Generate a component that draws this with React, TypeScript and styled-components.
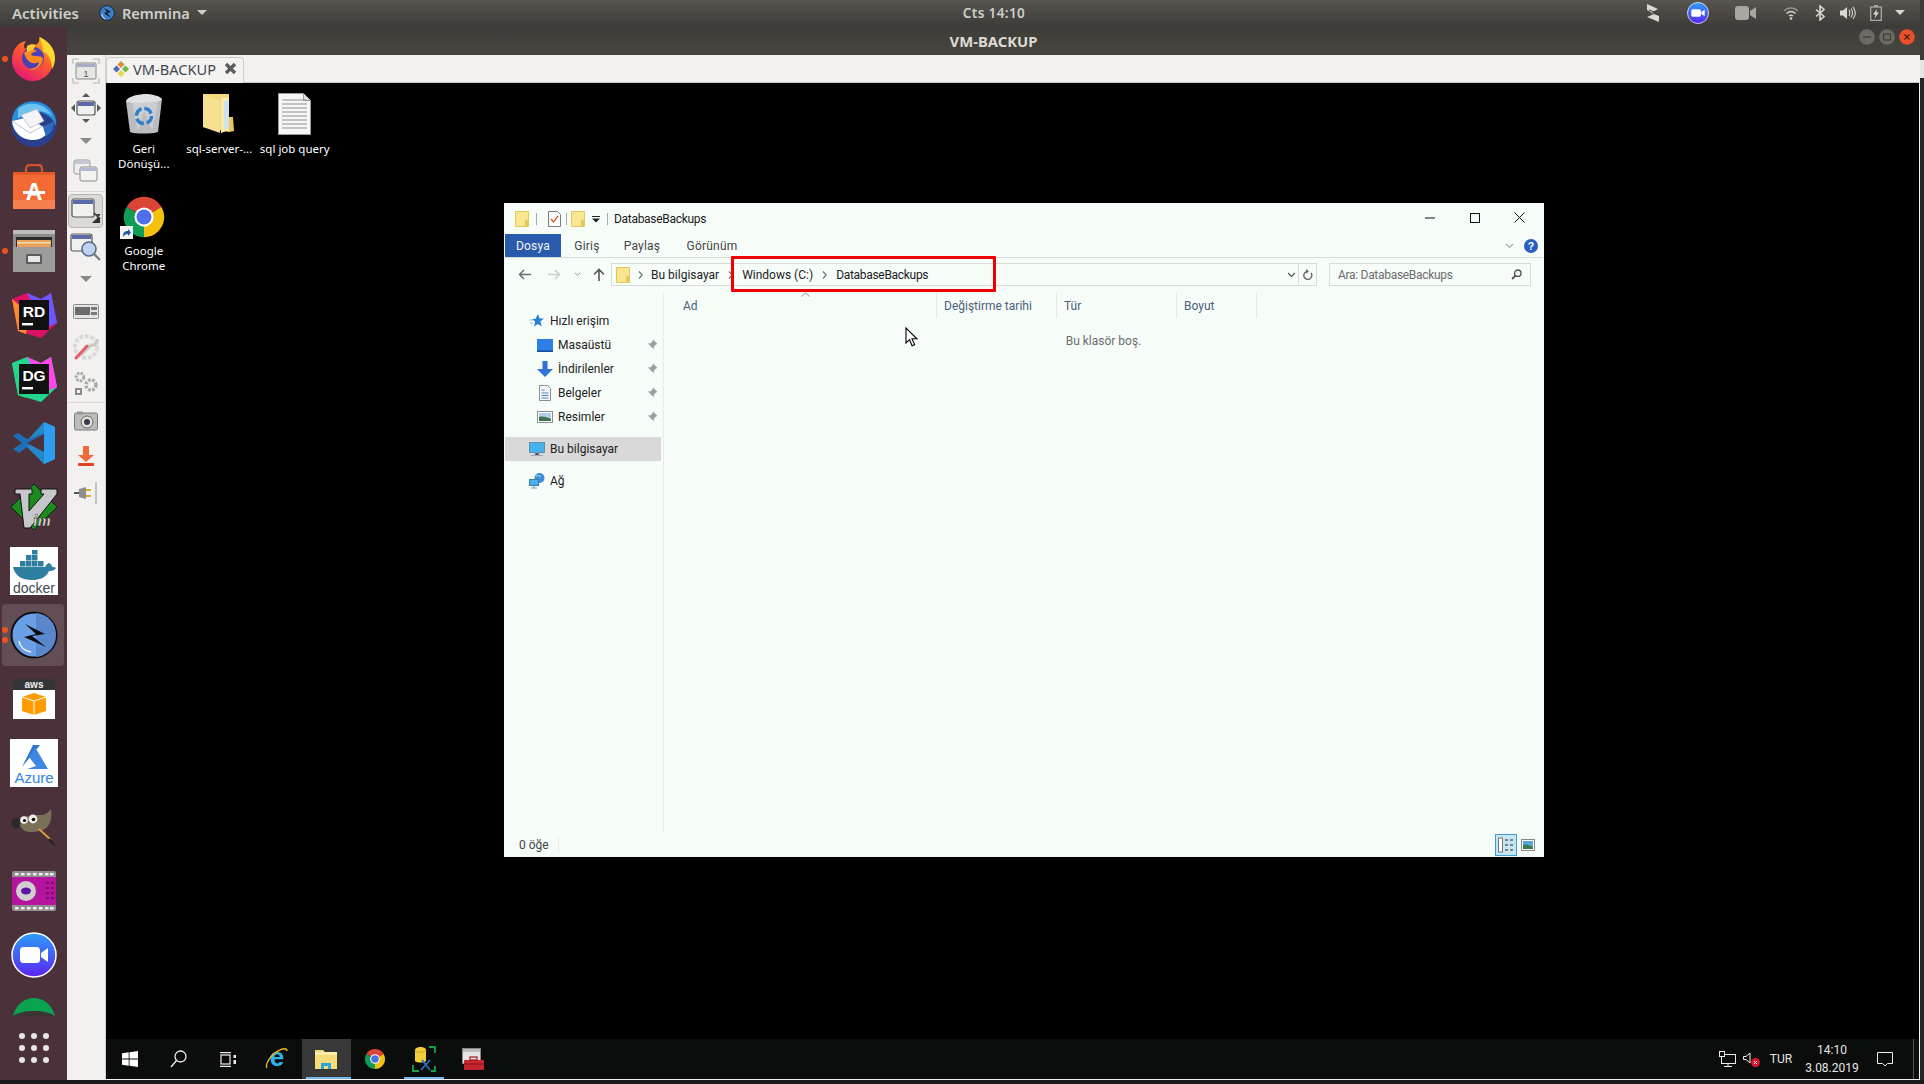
import React from 'react';
import styled, { createGlobalStyle } from 'styled-components';

const GlobalStyle = createGlobalStyle`
  html, body {
    margin: 0;
    padding: 0;
    background: #1c1c1c;
    overflow: hidden;
  }
  * {
    box-sizing: border-box;
  }
`;

const Page = styled.div`
  width: 1924px;
  height: 1084px;
  display: flex;
  align-items: flex-start;
`;

const Screen = styled.div`
  width: 1920px;
  height: 1080px;
  flex: none;
  display: flex;
  flex-direction: column;
  font-family: "Noto Sans", "Open Sans", sans-serif;
`;

const EdgeStrip = styled.div`
  width: 4px;
  height: 1080px;
  flex: none;
  background: linear-gradient(#3c3b37 60px, #e6e6e4 60px, #e6e6e4 78px, #262626 78px);
`;

const TopBar = styled.div`
  height: 27px;
  flex: none;
  display: grid;
  grid-template-columns: 1fr auto 1fr;
  align-items: center;
  padding: 0 12px 2px;
  background: linear-gradient(#56554f, #3c3b37);
  color: #cfcec8;
  font-size: 15px;
  font-weight: 600;
`;

const TopLeft = styled.div`
  display: flex;
  align-items: center;
  gap: 20px;
`;

const AppMenu = styled.div`
  display: flex;
  align-items: center;
  gap: 7px;
  font-size: 14.6px;
`;

const Clock = styled.div`
  margin-left: 68px;
  font-size: 13.5px;
  letter-spacing: 0.4px;
`;

const TopRight = styled.div`
  display: flex;
  justify-content: flex-end;
  align-items: center;
`;

const TraySlot = styled.div<{ $w: number }>`
  width: ${(p) => p.$w}px;
  display: flex;
  justify-content: center;
  align-items: center;
`;

const Main = styled.div`
  flex: 1;
  display: flex;
  min-height: 0;
`;

const Dock = styled.div`
  width: 67px;
  flex: none;
  display: flex;
  flex-direction: column;
  background: #4b323a;
  overflow: hidden;
`;

const DockSlot = styled.div<{ $active?: boolean; $h?: number }>`
  position: relative;
  height: ${(p) => p.$h ?? 64}px;
  flex: none;
  display: flex;
  align-items: ${(p) => (p.$h ? 'flex-start' : 'center')};
  justify-content: center;
  padding-top: ${(p) => (p.$h ? 11 : 0)}px;
  overflow: hidden;
  &::before {
    content: '';
    display: ${(p) => (p.$active ? 'block' : 'none')};
    position: absolute;
    inset: 1px 3px 1px 2px;
    border-radius: 4px;
    background: rgba(255, 255, 255, 0.14);
  }
  svg {
    position: relative;
    flex: none;
  }
`;

const RunDots = styled.div`
  position: absolute;
  left: 2px;
  top: 0;
  bottom: 0;
  display: flex;
  flex-direction: column;
  justify-content: center;
  gap: 4px;
`;

const RunDot = styled.span`
  width: 6px;
  height: 6px;
  border-radius: 50%;
  background: #e95420;
`;

const AppArea = styled.div`
  flex: 1;
  display: flex;
  flex-direction: column;
  min-width: 0;
`;

const TitleBar = styled.div`
  height: 28px;
  flex: none;
  display: flex;
  align-items: center;
  justify-content: center;
  position: relative;
  background: linear-gradient(#3e3d39, #46453f);
  color: #dedbd2;
  font-size: 14.8px;
  font-weight: 700;
  padding-bottom: 1px;
`;

const WinButtons = styled.div`
  position: absolute;
  right: 3px;
  top: 2px;
  display: flex;
  align-items: center;
`;

const RemminaBody = styled.div`
  flex: 1;
  display: flex;
  min-height: 0;
  background: #f2f1ef;
`;

const ToolBar = styled.div`
  width: 39px;
  flex: none;
  display: flex;
  flex-direction: column;
  border-right: 1px solid #d4d2ce;
`;

const ToolSlot = styled.div<{ $h: number; $selected?: boolean }>`
  height: ${(p) => p.$h}px;
  flex: none;
  display: flex;
  align-items: center;
  justify-content: center;
  margin: 0 ${(p) => (p.$selected ? '2px' : '0')} 0 ${(p) => (p.$selected ? '1px' : '0')};
  border-radius: 4px;
  ${(p) => (p.$selected ? 'background: #dcdad6; border: 1px solid #b8b6b1;' : '')}
`;

const ToolSep = styled.div<{ $after?: number }>`
  height: 1px;
  flex: none;
  margin-bottom: ${(p) => p.$after ?? 0}px;
  background: #dbd9d5;
`;

const SessionColumn = styled.div`
  flex: 1;
  display: flex;
  flex-direction: column;
  min-width: 0;
`;

const TabStrip = styled.div`
  height: 28px;
  flex: none;
  display: flex;
  align-items: flex-end;
  border-bottom: 1px solid #c9c7c2;
`;

const SessionTab = styled.div`
  width: 138px;
  height: 26px;
  margin-bottom: -1px;
  display: flex;
  align-items: center;
  gap: 3px;
  padding: 0 0 4px 5px;
  background: #f4f3f1;
  border: 1px solid #cfcdc8;
  border-bottom: none;
  border-radius: 4px 4px 0 0;
  color: #3f4650;
  font-size: 14.6px;
`;

const TabClose = styled.span`
  display: flex;
  margin-left: 5px;
`;

const Desktop = styled.div`
  flex: 1;
  display: flex;
  flex-direction: column;
  min-height: 0;
  background: #000;
  margin-bottom: 1px;
  margin-right: 1px;
`;

const DesktopArea = styled.div`
  flex: 1;
  position: relative;
  min-height: 0;
`;

const IconGrid = styled.div`
  position: absolute;
  left: 0;
  top: 0;
  display: grid;
  grid-template-columns: repeat(3, 75.5px);
  grid-template-rows: 102px 100px;
  padding: 10px 0 0 0;
`;

const DesktopIcon = styled.div`
  display: flex;
  flex-direction: column;
  align-items: center;
  color: #fff;
  font-size: 11.5px;
  line-height: 15px;
  text-align: center;
  svg {
    margin-bottom: 6px;
  }
`;

const ExplorerWindow = styled.div`
  position: absolute;
  left: 398px;
  top: 120px;
  width: 1040px;
  height: 654px;
  display: flex;
  flex-direction: column;
  padding: 0 1px;
  background: #f6fdf9;
  color: #1c1c1c;
  font-family: Roboto, "Noto Sans", sans-serif;
  font-size: 12px;
`;

const TightText = styled.span`
  letter-spacing: -0.3px;
  white-space: nowrap;
`;

const WinTitle = styled.div`
  height: 31px;
  flex: none;
  display: flex;
  align-items: center;
  padding-left: 10px;
`;

const QuickSep = styled.span<{ $l: number; $r: number }>`
  width: 1px;
  height: 12px;
  margin: 0 ${(p) => p.$r}px 0 ${(p) => p.$l}px;
  background: #a8aca9;
`;

const CaptionButtons = styled.div`
  margin-left: auto;
  padding-right: 1px;
  display: flex;
`;

const CaptionButton = styled.div`
  width: 45px;
  height: 29px;
  margin-bottom: 2px;
  display: flex;
  align-items: center;
  justify-content: center;
`;

const RibbonTabs = styled.div`
  height: 24px;
  flex: none;
  display: flex;
  align-items: stretch;
  border-bottom: 1px solid #d8dcd9;
  padding-right: 5px;
`;

const RibbonTab = styled.div<{ $active?: boolean; $w: number }>`
  width: ${(p) => p.$w}px;
  height: 23px;
  display: flex;
  align-items: center;
  justify-content: center;
  background: ${(p) => (p.$active ? '#2a5aab' : 'transparent')};
  color: ${(p) => (p.$active ? '#f2f6fb' : '#444')};
  letter-spacing: 0.2px;
`;

const RibbonEnd = styled.div`
  margin-left: auto;
  display: flex;
  align-items: center;
  gap: 10px;
`;

const AddressRow = styled.div`
  height: 35px;
  flex: none;
  display: flex;
  align-items: center;
  padding-bottom: 2px;
`;

const NavButton = styled.div<{ $w: number }>`
  width: ${(p) => p.$w}px;
  flex: none;
  display: flex;
  justify-content: center;
  align-items: center;
`;

const AddressBox = styled.div`
  width: 706px;
  height: 23px;
  margin-left: 2px;
  flex: none;
  display: flex;
  align-items: center;
  padding-left: 4px;
  border: 1px solid #d8dcd9;
`;

const Crumb = styled.span`
  white-space: nowrap;
`;

const CrumbArrow = styled.span<{ $w: number }>`
  width: ${(p) => p.$w}px;
  flex: none;
  display: flex;
  justify-content: center;
`;

const AddressEnd = styled.div`
  margin-left: auto;
  height: 100%;
  display: flex;
  align-items: center;
`;

const RefreshCell = styled.div`
  width: 18px;
  height: 100%;
  margin-left: 2px;
  display: flex;
  align-items: center;
  justify-content: center;
  border-left: 1px solid #d8dcd9;
`;

const SearchBox = styled.div`
  width: 202px;
  height: 23px;
  margin-left: 12px;
  flex: none;
  display: flex;
  align-items: center;
  justify-content: space-between;
  padding: 0 8px;
  border: 1px solid #d8dcd9;
  color: #6d6d6d;
`;

const ContentRow = styled.div`
  flex: 1;
  display: flex;
  min-height: 0;
`;

const NavPane = styled.div`
  width: 159px;
  flex: none;
  padding-top: 16px;
  border-right: 1px solid #e6ece8;
`;

const NavRow = styled.div<{ $indent: number; $selected?: boolean; $gapTop?: boolean }>`
  height: 24px;
  display: flex;
  align-items: center;
  gap: 5px;
  margin: ${(p) => (p.$gapTop ? '8px' : '0')} 2px 0 0;
  padding: 0 3px 0 ${(p) => p.$indent}px;
  background: ${(p) => (p.$selected ? '#d9d9d9' : 'transparent')};
  color: #222;
`;

const NavPin = styled.span`
  margin-left: auto;
  display: flex;
`;

const FileArea = styled.div`
  flex: 1;
  display: flex;
  flex-direction: column;
  position: relative;
`;

const ColumnHeader = styled.div`
  height: 25px;
  flex: none;
  display: flex;
`;

const ColumnCell = styled.div<{ $w: number; $pad?: number }>`
  width: ${(p) => p.$w}px;
  flex: none;
  display: flex;
  align-items: center;
  padding-left: ${(p) => p.$pad ?? 7}px;
  border-right: 1px solid #e3e8e5;
  color: #4c607a;
`;

const SortCaret = styled.div`
  position: absolute;
  left: 137px;
  top: -1px;
  display: flex;
`;

const EmptyNote = styled.div`
  margin-top: 16px;
  text-align: center;
  color: #6d6d6d;
`;

const Pointer = styled.div`
  position: absolute;
  left: 241px;
  top: 34px;
  display: flex;
`;

const StatusBar = styled.div`
  height: 24px;
  flex: none;
  display: flex;
  align-items: center;
  padding: 0 7px 1px 14px;
  color: #444;
`;

const StatusCount = styled.span`
  width: 40px;
  border-right: 1px solid #e6ece8;
`;

const ViewButtons = styled.div`
  margin-left: auto;
  display: flex;
  align-items: center;
  gap: 3px;
`;

const ViewButton = styled.div<{ $active?: boolean }>`
  width: ${(p) => (p.$active ? 22 : 16)}px;
  height: 22px;
  display: flex;
  align-items: center;
  justify-content: center;
  ${(p) => (p.$active ? 'background: #c4e6f3; border: 1px solid #3f9bd6;' : '')}
`;

const RedFrame = styled.div`
  position: absolute;
  left: 227px;
  top: 53px;
  width: 265px;
  height: 36px;
  border: 3px solid #f00000;
  border-radius: 1px;
  pointer-events: none;
`;

const Taskbar = styled.div`
  height: 40px;
  flex: none;
  display: flex;
  align-items: stretch;
  background: #0b0c0c;
  color: #e6e6e6;
  font-family: Roboto, "Noto Sans", sans-serif;
`;

const TaskSlot = styled.div<{ $open?: boolean; $focused?: boolean }>`
  width: 49px;
  flex: none;
  display: flex;
  align-items: center;
  justify-content: center;
  padding-right: 2px;
  background-color: ${(p) => (p.$focused ? '#383838' : 'transparent')};
  background-image: ${(p) => (p.$open ? 'linear-gradient(#76b9ed, #76b9ed)' : 'none')};
  background-repeat: no-repeat;
  background-position: 4px bottom;
  background-size: ${(p) => (p.$focused ? '48px' : '40px')} 2px;
`;

const IeLift = styled.span`
  display: flex;
  margin-top: -4px;
`;

const TaskTray = styled.div`
  margin-left: auto;
  display: flex;
  align-items: center;
  font-size: 12px;
  height: 100%;
`;

const TrayIcon = styled.div<{ $w: number }>`
  width: ${(p) => p.$w}px;
  display: flex;
  align-items: center;
  justify-content: center;
`;

const TrayClock = styled.div`
  width: 62px;
  display: flex;
  flex-direction: column;
  align-items: center;
  line-height: 18px;
`;

const TrayEnd = styled.div`
  width: 6px;
  height: 100%;
  margin-left: 6px;
  border-left: 1px solid #555;
`;

/* ------- drawings ------- */

const Firefox = () => (
  <svg width="46" height="46" viewBox="0 0 46 46">
    <defs>
      <linearGradient id="ffa" x1="0.8" y1="0" x2="0.2" y2="1">
        <stop offset="0" stopColor="#ffb32c" />
        <stop offset="0.45" stopColor="#ff5a2e" />
        <stop offset="1" stopColor="#e3127a" />
      </linearGradient>
    </defs>
    <path d="M28 1c7 4 14 10 15 19 1 14-9 25-21 25C10 45 1 35 1 24 1 14 7 6 15 5c-3 4-2 7-1 8 3-3 8-5 11-4C28 7 29 4 28 1z" fill="url(#ffa)" />
    <path d="M29 1c8 4 15 11 15 21 0 4-1 8-3 11 0-8-3-14-9-18 0-5-2-9-3-14z" fill="#ffd92f" />
    <circle cx="22" cy="22" r="11" fill="#4c3fb8" />
    <path d="M13 17c4-3 9-5 13-2-3 1-6 2-6 4 4 2 9 0 12 3 0 8-8 14-15 11 6 0 10-2 11-7-5 3-12 1-15-9z" fill="#ff8a1e" />
    <path d="M16 10c3-2 7-2 9-1l-3 5c-2 0-4 1-6 2z" fill="#ffca2c" />
  </svg>
);

const Thunderbird = () => (
  <svg width="48" height="48" viewBox="0 0 48 48">
    <circle cx="24" cy="25" r="23" fill="#2b3f8f" />
    <path d="M6 10c6-8 20-10 30-4 7 5 11 13 10 21-3-8-9-12-16-14l-18 6L2 22C2 17 4 13 6 10z" fill="#2a8fd8" />
    <path d="M8 10c6-6 18-7 26-2 3 2 6 5 8 9-6-5-14-6-22-4L8 19z" fill="#6ec3f0" />
    <path d="M2 22l17-4 14 10 9-3c-2 10-11 17-21 16C11 40 3 33 2 22z" fill="#fff" />
    <path d="M2 22l18 12 13-7" fill="none" stroke="#b9c3d6" strokeWidth="1" />
    <path d="M11 16l16-6 7 12-14 7z" fill="#f4f4f6" stroke="#aab" strokeWidth="0.6" />
    <path d="M33 28l12-6-3 10-6 6z" fill="#2c6bbf" />
  </svg>
);

const SoftwareCenter = () => (
  <svg width="44" height="46" viewBox="0 0 44 46">
    <path d="M14 10V5c0-3 2-4 4-4h8c2 0 4 1 4 4v5" fill="none" stroke="#c9552a" strokeWidth="2.4" />
    <rect x="1" y="8" width="42" height="37" fill="#f26b35" />
    <rect x="1" y="8" width="42" height="3" fill="#e05a26" />
    <rect x="1" y="36" width="42" height="9" fill="#f6814e" />
    <text x="22" y="36" textAnchor="middle" fontFamily="Liberation Sans" fontWeight="700" fontSize="23" fill="#fff">A</text>
    <rect x="11" y="27" width="22" height="3" fill="#fff" />
  </svg>
);

const FileCabinet = () => (
  <svg width="44" height="44" viewBox="0 0 44 44">
    <rect x="1" y="1" width="42" height="42" rx="3" fill="#8d8d8b" />
    <rect x="1" y="1" width="42" height="4" fill="#bdbdba" />
    <rect x="4" y="8" width="36" height="10" fill="#2a2a2a" />
    <rect x="5" y="11" width="34" height="7" fill="#e9a05a" />
    <rect x="5" y="13" width="34" height="1.5" fill="#f5d9b0" />
    <rect x="1" y="18" width="42" height="25" fill="#9c9c9a" />
    <rect x="14" y="25" width="16" height="10" rx="1.5" fill="#5c5c5c" />
    <rect x="16" y="27" width="12" height="6" fill="#e8e8e6" />
  </svg>
);

const JetBrains = ({ label, a, b, c }: { label: string; a: string; b: string; c: string }) => (
  <svg width="48" height="48" viewBox="0 0 48 48">
    <path d="M2 8l15-6 14 6 10-6 6 30-16 15L8 40z" fill={a} />
    <path d="M17 2l14 6 10-6 6 30-12 5z" fill={b} />
    <path d="M2 8l6 32 8 3 4-20z" fill={c} />
    <rect x="9" y="9" width="30" height="30" fill="#111" />
    <text x="24" y="26" textAnchor="middle" fontFamily="Liberation Sans" fontWeight="700" fontSize="15.5" fill="#fff">{label}</text>
    <rect x="12" y="32" width="11" height="2.4" fill="#fff" />
  </svg>
);

const VsCode = () => (
  <svg width="44" height="44" viewBox="0 0 44 44">
    <path d="M32 1l11 5v32l-11 5L12 23z" fill="#2489ca" />
    <path d="M32 1l11 5v32l-11 5z" fill="#2d9df0" />
    <path d="M32 12L15 26 7 32 1 28l9-6-9-7 5-3 9 6z" fill="#1f6fb8" />
    <path d="M32 13v18L15 22z" fill="#4b323a" />
  </svg>
);

const Vim = () => (
  <svg width="48" height="48" viewBox="0 0 48 48">
    <path d="M24 1l23 23-23 23L1 24z" fill="#1d8a1d" stroke="#111" strokeWidth="0.8" />
    <path d="M5 6h17v5h-3v17L34 11h-3V6h16v5L20 45h-6L10 11H5z" fill="#c7c7cb" stroke="#111" strokeWidth="1" />
    <text x="32" y="43" textAnchor="middle" fontFamily="Liberation Serif" fontStyle="italic" fontWeight="700" fontSize="17" fill="#ddd" stroke="#111" strokeWidth="0.4">im</text>
  </svg>
);

const DockerLogo = () => (
  <svg width="48" height="48" viewBox="0 0 48 48">
    <rect width="48" height="48" fill="#fff" />
    <g fill="#2e7f9f">
      <rect x="10" y="14" width="5.5" height="5.5" />
      <rect x="16" y="14" width="5.5" height="5.5" />
      <rect x="22" y="14" width="5.5" height="5.5" />
      <rect x="16" y="8" width="5.5" height="5.5" />
      <rect x="22" y="8" width="5.5" height="5.5" />
      <rect x="22" y="3" width="5.5" height="4.5" />
      <rect x="28" y="14" width="5.5" height="5.5" />
    </g>
    <path d="M3 20h32c1-2 3-4 4-4 2 1 3 2 3 4 2 0 3 0 4 1-2 3-5 3-7 3-3 7-10 9-17 9-10 0-17-4-19-13z" fill="#2e7f9f" />
    <text x="24" y="46" textAnchor="middle" fontFamily="Liberation Sans" fontSize="14" fill="#3c4a52">docker</text>
  </svg>
);

const RemminaLogo = ({ size = 48 }: { size?: number }) => (
  <svg width={size} height={size} viewBox="0 0 48 48">
    <circle cx="24" cy="24" r="22.5" fill="#6a9fe6" stroke="#0d0d12" strokeWidth="2" />
    <path d="M26 2c12 1 20 10 20 22 0 12-9 21-20 22z" fill="#5a86cc" />
    <path d="M9 30c1 6 6 10 12 11" fill="none" stroke="#fff" strokeWidth="1.5" />
    <path d="M15 13l20 10-13 2 14 11-22-10 12-3z" fill="#0b0b10" />
  </svg>
);

const AwsBox = () => (
  <svg width="42" height="40" viewBox="0 0 42 40">
    <rect width="42" height="40" fill="#fff" />
    <rect width="42" height="11" fill="#333537" />
    <text x="21" y="9" textAnchor="middle" fontFamily="Liberation Sans" fontWeight="700" fontSize="10" fill="#eee">aws</text>
    <path d="M21 14l12 4v14l-12 4-12-4V18z" fill="#ff9a00" />
    <path d="M9 18l12 4 12-4" fill="none" stroke="#fff" strokeWidth="1" />
    <path d="M21 22v14" stroke="#fff" strokeWidth="1" />
  </svg>
);

const AzureLogo = () => (
  <svg width="48" height="48" viewBox="0 0 48 48">
    <rect width="48" height="48" fill="#fff" />
    <path d="M23 6h7L12 28z" fill="#2f74d0" />
    <path d="M25 8l13 22H17l9-3-7-9z" fill="#3d88e0" />
    <text x="24" y="44" textAnchor="middle" fontFamily="Liberation Sans" fontSize="15" fill="#2f86d8">Azure</text>
  </svg>
);

const Gimp = () => (
  <svg width="46" height="40" viewBox="0 0 46 40">
    <path d="M8 14C12 8 22 8 30 8c4 0 7-2 10-6 1 8 0 16-6 20-6 3-15 4-20 2-3-2-6-5-6-10z" fill="#7a7058" />
    <ellipse cx="5" cy="16" rx="4.5" ry="5.5" fill="#2a2a2a" />
    <circle cx="13" cy="13" r="3.8" fill="#eee" />
    <circle cx="22" cy="12" r="4.4" fill="#eee" />
    <circle cx="13.5" cy="13.5" r="1.6" fill="#111" />
    <circle cx="22.5" cy="12.5" r="1.8" fill="#111" />
    <path d="M28 22l12 11" stroke="#e09a3a" strokeWidth="1.8" />
    <path d="M39 31l5 7-1 1-6-6z" fill="#222" />
  </svg>
);

const VideoApp = () => (
  <svg width="44" height="40" viewBox="0 0 44 40">
    <rect width="44" height="40" rx="2" fill="#8f8f8f" />
    <rect y="6" width="44" height="28" fill="#b5149e" />
    <g fill="#f5f5f5">
      {[3, 9, 15, 21, 27, 33, 38].map((x) => (
        <React.Fragment key={x}>
          <rect x={x} y="2" width="3.5" height="2.4" />
          <rect x={x} y="36" width="3.5" height="2.4" />
        </React.Fragment>
      ))}
    </g>
    <g fill="#7c0c6c">
      {[11, 16, 21, 26].map((y) => (
        <React.Fragment key={y}>
          <rect x="34" y={y} width="3" height="2" />
          <rect x="39" y={y} width="3" height="2" />
        </React.Fragment>
      ))}
    </g>
    <circle cx="14" cy="20" r="10" fill="#cfcfcf" />
    <ellipse cx="14" cy="20" rx="5" ry="3.4" fill="#5f12a8" />
  </svg>
);

const ZoomLogo = ({ size = 46 }: { size?: number }) => (
  <svg width={size} height={size} viewBox="0 0 46 46">
    <defs>
      <linearGradient id={`zg${size}`} x1="0" y1="0" x2="0" y2="1">
        <stop offset="0" stopColor="#2c9dfb" />
        <stop offset="1" stopColor="#5a25f2" />
      </linearGradient>
    </defs>
    <circle cx="23" cy="23" r="22" fill={`url(#zg${size})`} stroke="#fff" strokeWidth="1.5" />
    <rect x="9" y="15" width="20" height="16" rx="3.5" fill="#fff" />
    <path d="M30 21l7-5v14l-7-5z" fill="#fff" />
  </svg>
);

const GreenDome = () => (
  <svg width="42" height="22" viewBox="0 0 42 22">
    <path d="M0 18C3 6 12 0 21 0s18 6 21 18c-6-4-14-5-21-5s-15 1-21 5z" fill="#0aa34f" />
    <path d="M0 18c6-4 14-5 21-5s15 1 21 5v4H0z" fill="#2f3a30" opacity="0.55" />
  </svg>
);

const AppGrid = () => (
  <svg width="32" height="32" viewBox="0 0 32 32" fill="#e8e5e5">
    {[4, 16, 28].map((y) => [4, 16, 28].map((x) => <circle key={`${x}-${y}`} cx={x} cy={y} r="3" />))}
  </svg>
);

const RemminaSmall = () => (
  <svg width="16" height="16" viewBox="0 0 16 16">
    <circle cx="8" cy="8" r="7.4" fill="#3f7fc9" stroke="#12243c" strokeWidth="1" />
    <path d="M5 3l7 4-4 1 4 5-7-5 3-1z" fill="#0d1420" />
    <path d="M3 9c0 2 1 4 3 5" fill="none" stroke="#fff" strokeWidth="0.9" />
  </svg>
);

const DownCaret = ({ c = '#cfcec8', w = 10, h = 5 }: { c?: string; w?: number; h?: number }) => (
  <svg width={w} height={h} viewBox="0 0 10 5">
    <path d="M0 0h10L5 5z" fill={c} />
  </svg>
);

const ZigZag = () => (
  <svg width="14" height="20" viewBox="0 0 14 20">
    <path d="M1 1l11 5-7 4 8 3v6L1 14l7-3L1 7z" fill="#d9d9d0" />
    <path d="M3 7l8 3" stroke="#3c3b37" strokeWidth="1" />
  </svg>
);

const TrayVideo = () => (
  <svg width="21" height="14" viewBox="0 0 21 14" fill="#a8a7a1">
    <rect width="14" height="14" rx="3" />
    <path d="M15 5l6-4v12l-6-4z" />
  </svg>
);

const Wifi = () => (
  <svg width="16" height="14" viewBox="0 0 16 14" fill="none" stroke="#d8d7d0">
    <path d="M1 5c4-4 10-4 14 0" opacity="0.5" strokeWidth="1.4" />
    <path d="M3.5 7.5c3-2.6 6-2.6 9 0" strokeWidth="1.4" />
    <path d="M6 10c1.4-1 2.6-1 4 0" strokeWidth="1.4" />
    <circle cx="8" cy="12.5" r="1.2" fill="#d8d7d0" stroke="none" />
  </svg>
);

const Bluetooth = () => (
  <svg width="10" height="16" viewBox="0 0 10 16" fill="none" stroke="#d8d7d0" strokeWidth="1.6">
    <path d="M1 4.5l8 7L5 15V1l4 3.5-8 7" />
  </svg>
);

const Volume = () => (
  <svg width="16" height="14" viewBox="0 0 16 14" fill="#d8d7d0">
    <path d="M0 4.5h3L7 1v12L3 9.5H0z" />
    <path d="M9 4c1 2 1 4 0 6M11 2.5c2 3 2 6 0 9M13 1c3 4 3 8 0 12" fill="none" stroke="#d8d7d0" strokeWidth="1.1" />
  </svg>
);

const Battery = () => (
  <svg width="12" height="16" viewBox="0 0 12 16">
    <rect x="0.7" y="2" width="10.6" height="13.4" fill="none" stroke="#a8a7a1" strokeWidth="1.3" />
    <rect x="4" y="0" width="4" height="2" fill="#a8a7a1" />
    <path d="M7 4L3 9.5h2.5L4.5 13.5 9 7.5H6.5z" fill="#d8d7d0" />
  </svg>
);

const CircleBtn = ({ red, glyph }: { red?: boolean; glyph: 'min' | 'max' | 'close' }) => (
  <svg width="16" height="16" viewBox="0 0 16 16">
    <circle cx="8" cy="8" r="7.8" fill={red ? '#e8502a' : '#6b6a63'} />
    {glyph === 'min' && <path d="M4 8h8" stroke="#3b3a35" strokeWidth="1.2" />}
    {glyph === 'max' && <rect x="4.5" y="5" width="7" height="6" fill="none" stroke="#3b3a35" strokeWidth="1.1" />}
    {glyph === 'close' && <path d="M5.5 5.5l5 5M10.5 5.5l-5 5" stroke="#4a1c0e" strokeWidth="1.2" />}
  </svg>
);

const MiniWindow = ({ x = 6, y = 8, w = 20, h = 16 }: { x?: number; y?: number; w?: number; h?: number }) => (
  <g>
    <rect x={x} y={y} width={w} height={h} rx="2" fill="#f0f0ee" stroke="#565656" strokeWidth="1.2" />
    <rect x={x + 1} y={y + 1} width={w - 2} height="4" fill="#5b6aa8" />
  </g>
);

const ToolFit = () => (
  <svg width="28" height="26" viewBox="0 0 28 26">
    <path d="M1 6V1h6M21 1h6v5M27 20v5h-6M7 25H1v-5" fill="none" stroke="#b9b9b6" strokeWidth="1.2" />
    <rect x="4" y="5" width="20" height="16" rx="1" fill="#e6e6e4" stroke="#8a8a88" />
    <rect x="5" y="6" width="18" height="3" fill="#a9aec4" />
    <text x="14" y="19" textAnchor="middle" fontFamily="Liberation Sans" fontSize="9" fill="#555">1</text>
  </svg>
);

const ToolMove = () => (
  <svg width="32" height="32" viewBox="0 0 32 32">
    <MiniWindow x={7} y={9} w={18} h={14} />
    <path d="M16 1l4 4h-8zM16 31l4-4h-8zM1 16l4-4v8zM31 16l-4-4v8z" fill="#5a5a5a" />
  </svg>
);

const ToolStack = () => (
  <svg width="26" height="26" viewBox="0 0 26 26">
    <rect x="1" y="1" width="16" height="14" rx="2" fill="#eee" stroke="#9a9a98" />
    <rect x="2" y="2" width="14" height="3" fill="#c4c8d8" />
    <rect x="7" y="8" width="17" height="14" rx="2" fill="#f2f2f0" stroke="#8a8a88" />
    <rect x="8" y="9" width="15" height="3" fill="#b3b9d0" />
  </svg>
);

const ToolScale = () => (
  <svg width="32" height="28" viewBox="0 0 32 28">
    <MiniWindow x={2} y={2} w={22} h={18} />
    <path d="M26 17l4 4v-4zM30 26h-8l8-8z" fill="#333" />
    <path d="M24 16l6 6" stroke="#333" strokeWidth="1.4" />
  </svg>
);

const ToolZoom = () => (
  <svg width="32" height="30" viewBox="0 0 32 30">
    <MiniWindow x={1} y={2} w={21} h={17} />
    <circle cx="19" cy="17" r="7" fill="#bcd4ef" stroke="#5a6a85" strokeWidth="1.6" />
    <path d="M24 22l6 6" stroke="#77797d" strokeWidth="2.2" />
  </svg>
);

const ToolCaret = () => <DownCaret c="#8a8a88" w={12} h={6} />;

const ToolKeyboard = () => (
  <svg width="26" height="15" viewBox="0 0 26 15">
    <rect x="0.5" y="0.5" width="25" height="14" rx="1" fill="#e4e4e2" stroke="#8a8a88" />
    <rect x="2" y="3" width="15" height="8" fill="#6a6a68" />
    <rect x="18" y="3" width="6" height="3" fill="#777" />
    <rect x="18" y="8" width="6" height="3" fill="#777" />
  </svg>
);

const ToolWrench = () => (
  <svg width="26" height="26" viewBox="0 0 26 26">
    <circle cx="13" cy="13" r="11" fill="none" stroke="#d9d9d7" strokeWidth="4" strokeDasharray="4 1.6" />
    <path d="M24 5c1 4-2 7-6 6L8 21" fill="none" stroke="#c9c9c7" strokeWidth="3" />
    <path d="M3 24l11-12" stroke="#e0606a" strokeWidth="3" strokeLinecap="round" />
  </svg>
);

const ToolGears = () => (
  <svg width="26" height="26" viewBox="0 0 26 26" fill="none" stroke="#a9a9a7">
    <circle cx="7" cy="7" r="3.8" strokeWidth="3" strokeDasharray="2.4 1.2" />
    <circle cx="18" cy="15" r="5" strokeWidth="3.4" strokeDasharray="2.6 1.4" />
    <rect x="3" y="19" width="5" height="5" strokeWidth="2" stroke="#8a8a88" />
  </svg>
);

const ToolCamera = () => (
  <svg width="24" height="20" viewBox="0 0 24 20">
    <rect x="0.5" y="2" width="23" height="17" rx="1.5" fill="#bdbdbb" stroke="#7a7a78" />
    <rect x="3" y="0.5" width="6" height="3" fill="#9a9a98" />
    <circle cx="13" cy="11" r="6" fill="#dfdfdd" stroke="#666" />
    <circle cx="13" cy="11" r="3" fill="#3a3a4a" />
  </svg>
);

const ToolDownload = () => (
  <svg width="18" height="22" viewBox="0 0 18 22">
    <path d="M6 1h6v9h5l-8 7-8-7h5z" fill="#ef6a3a" />
    <rect x="1" y="18" width="16" height="3" rx="1" fill="#e0411e" />
  </svg>
);

const ToolPlug = () => (
  <svg width="24" height="24" viewBox="0 0 24 24">
    <path d="M0 12h5" stroke="#555" strokeWidth="2" />
    <path d="M5 8l7-2v12l-7-2z" fill="#8e8e8c" />
    <rect x="12" y="8" width="5" height="2" fill="#d6b32a" />
    <rect x="12" y="14" width="5" height="2" fill="#d6b32a" />
    <path d="M22 1v22" stroke="#c3c3c1" strokeWidth="2" />
  </svg>
);

const RecycleBin = () => (
  <svg width="40" height="42" viewBox="0 0 40 42">
    <path d="M2 8l36-2-4 33c-5 2-24 2-28 0z" fill="#b9bdbf" />
    <path d="M2 8c2-4 8-6 18-7 8 0 16 2 18 5-3 4-30 6-36 2z" fill="#dfe2e4" />
    <path d="M8 10l6 28 6-20 8 20 6-30z" fill="#d2d5d7" opacity="0.7" />
    <circle cx="20" cy="23" r="7.5" fill="none" stroke="#2f7fcb" strokeWidth="3.4" strokeDasharray="9 2.8" />
  </svg>
);

const BigFolder = () => (
  <svg width="34" height="42" viewBox="0 0 34 42">
    <path d="M1 1h26v38L1 34z" fill="#f2d77c" />
    <path d="M19 5l8-1v33l-8 3z" fill="#f8eaaf" />
    <rect x="22" y="8" width="5" height="28" fill="#cfe0ee" />
    <path d="M27 24l4 0 1 14-5 1z" fill="#e8c75c" />
    <path d="M1 34l17 6V8L1 1z" fill="#f7e08f" />
  </svg>
);

const TextFile = () => (
  <svg width="33" height="42" viewBox="0 0 33 42">
    <path d="M0.5 0.5h25l7 7v34h-32z" fill="#f6f6f6" stroke="#9a9a9a" />
    <path d="M25.5 0.5v7h7" fill="#ddd" stroke="#9a9a9a" />
    {[7, 11, 15, 19, 23, 27, 31, 35].map((y) => (
      <path key={y} d={`M4 ${y}h25`} stroke="#8f8f8f" strokeWidth="1" />
    ))}
  </svg>
);

const Chrome = ({ size = 44 }: { size?: number }) => (
  <svg width={size} height={size} viewBox="0 0 48 48">
    <path d="M24 24L4.95 13A22 22 0 0 1 43.05 13z" fill="#db4437" />
    <path d="M24 24L43.05 13A22 22 0 0 1 24 46z" fill="#f4c20d" />
    <path d="M24 24L24 46A22 22 0 0 1 4.95 13z" fill="#0f9d58" />
    <circle cx="24" cy="24" r="10.5" fill="#fff" />
    <circle cx="24" cy="24" r="8.2" fill="#4f6fe8" />
  </svg>
);

const ShortcutBadge = () => (
  <svg width="13" height="13" viewBox="0 0 13 13">
    <rect width="13" height="13" fill="#f2f2f2" />
    <path d="M3 11c0-4 1-6 5-6V3l3 3.5L8 10V8c-2 0-4 1-5 3z" fill="#2a57a8" />
  </svg>
);

const ChromeWithBadge = styled.div`
  position: relative;
  display: flex;
  margin-bottom: 4px;
  svg {
    margin: 0;
  }
  svg + svg {
    position: absolute;
    left: -2px;
    bottom: 0;
  }
`;

const SmallFolder = () => (
  <svg width="14" height="16" viewBox="0 0 14 16">
    <path d="M0.5 0.5h13v15h-13z" fill="#f9e690" stroke="#e3c85a" />
    <rect x="10" y="9" width="3" height="6" fill="#e3c85a" />
  </svg>
);

const CheckDoc = () => (
  <svg width="13" height="16" viewBox="0 0 13 16">
    <path d="M0.5 0.5h9l3 3v12h-12z" fill="#fbfdfc" stroke="#7c7c7c" />
    <path d="M3 8l2.5 3L10 5" fill="none" stroke="#d9553a" strokeWidth="1.3" />
  </svg>
);

const QuickDown = () => (
  <svg width="8" height="8" viewBox="0 0 8 8">
    <rect y="1" width="8" height="1" fill="#222" />
    <path d="M0 3.5h8L4 7.5z" fill="#222" />
  </svg>
);

const Chevron = ({ c = '#8a8a8a', w = 9 }: { c?: string; w?: number }) => (
  <svg width={w} height={w * 0.66} viewBox="0 0 9 6">
    <path d="M1 1l3.5 3.5L8 1" fill="none" stroke={c} strokeWidth="1.2" />
  </svg>
);

const CrumbChevron = () => (
  <svg width="5" height="8" viewBox="0 0 5 8">
    <path d="M1 0.5L4.2 4 1 7.5" fill="none" stroke="#777" strokeWidth="1.3" />
  </svg>
);

const ArrowLeft = ({ c }: { c: string }) => (
  <svg width="13" height="11" viewBox="0 0 13 11">
    <path d="M13 5.5H2M6 1L1.5 5.5 6 10" fill="none" stroke={c} strokeWidth="1.5" />
  </svg>
);

const ArrowRight = ({ c }: { c: string }) => (
  <svg width="13" height="11" viewBox="0 0 13 11">
    <path d="M0 5.5h11M7 1l4.5 4.5L7 10" fill="none" stroke={c} strokeWidth="1.5" />
  </svg>
);

const ArrowUp = () => (
  <svg width="12" height="13" viewBox="0 0 12 13">
    <path d="M6 13V2M1 6.5L6 1.5l5 5" fill="none" stroke="#555" strokeWidth="1.6" />
  </svg>
);

const Refresh = () => (
  <svg width="10" height="12" viewBox="0 0 10 12">
    <path d="M8 4a4 4 0 1 1-3-1.6" fill="none" stroke="#666" strokeWidth="1.4" />
    <path d="M3 0l3 2.4-3 2.2z" fill="#666" />
  </svg>
);

const SearchGlass = () => (
  <svg width="11" height="11" viewBox="0 0 11 11">
    <circle cx="6.8" cy="4.2" r="3.2" fill="none" stroke="#555" strokeWidth="1.4" />
    <path d="M4.5 6.5L1 10" stroke="#555" strokeWidth="1.8" />
  </svg>
);

const HelpDot = () => (
  <svg width="14" height="14" viewBox="0 0 14 14">
    <circle cx="7" cy="7" r="7" fill="#2a5ec0" />
    <text x="7" y="11" textAnchor="middle" fontFamily="Liberation Sans" fontWeight="700" fontSize="10.5" fill="#fff">?</text>
  </svg>
);

const QuickStar = () => (
  <svg width="16" height="14" viewBox="0 0 16 14">
    <path d="M9 0l1.6 4.6H15l-3.6 3 1.3 5L9 10l-4 2.6 1.2-5L3 5l3.6-.3z" fill="#2b7ed6" />
    <path d="M0 6h4M1 9h3" stroke="#8cc0ee" />
  </svg>
);

const DesktopGlyph = () => (
  <svg width="16" height="13" viewBox="0 0 16 13">
    <rect width="16" height="13" fill="#2c7fe6" />
    <rect y="11.5" width="16" height="1.5" fill="#174e96" />
  </svg>
);

const DownloadGlyph = () => (
  <svg width="16" height="16" viewBox="0 0 16 16">
    <path d="M5.5 0h5v8H16l-8 8-8-8h5.5z" fill="#2f73d6" />
  </svg>
);

const DocGlyph = () => (
  <svg width="16" height="16" viewBox="0 0 16 16">
    <path d="M2.5 0.5h8l3 3v12h-11z" fill="#f5f8fb" stroke="#8a8f94" />
    <path d="M4.5 5h3M4.5 8h7M4.5 10.5h7M4.5 13h7" stroke="#4a7fc0" />
  </svg>
);

const PictureGlyph = () => (
  <svg width="16" height="12" viewBox="0 0 16 12">
    <rect x="0.5" y="0.5" width="15" height="11" fill="#fff" stroke="#8a8f94" />
    <rect x="2" y="2" width="12" height="8" fill="#b4cdea" />
    <path d="M2 10V6c3-1 8 0 12 2v2z" fill="#3f7050" />
  </svg>
);

const PinGlyph = () => (
  <svg width="12" height="12" viewBox="0 0 12 12">
    <path d="M7 0.5l4.5 4.5-1.5.5-2 2-.3 2.5L4.5 7.3 1 11l3.7-3.7L2 4.600 4.5 4.300l2-2z" fill="#9aa0a3" />
  </svg>
);

const ComputerGlyph = () => (
  <svg width="16" height="15" viewBox="0 0 16 15">
    <rect x="0.5" y="0.5" width="15" height="10" fill="#45b4ee" stroke="#5d8fb0" />
    <path d="M6 11h4v2H6zM2 13.5h12" stroke="#9ab" />
  </svg>
);

const NetworkGlyph = () => (
  <svg width="16" height="16" viewBox="0 0 16 16">
    <circle cx="10.5" cy="5" r="5" fill="#3d8cd8" />
    <path d="M7 3c2-1 4 0 5 1" stroke="#bfe0f5" fill="none" />
    <rect x="0.5" y="6.5" width="9" height="6" fill="#4eb0e8" stroke="#3c7ea8" />
    <path d="M5 13v2M2 15h6" stroke="#7a9ab0" />
  </svg>
);

const SortUp = () => (
  <svg width="9" height="5" viewBox="0 0 9 5">
    <path d="M0.5 4.5L4.5 1l4 3.5" fill="none" stroke="#8a8f94" />
  </svg>
);

const MouseArrow = () => (
  <svg width="13" height="20" viewBox="0 0 13 20">
    <path d="M1 1v15l3.5-3.3 2.6 6 2.5-1.100-2.600-5.800H12z" fill="#fff" stroke="#000" strokeWidth="1.1" />
  </svg>
);

const DetailsView = () => (
  <svg width="16" height="16" viewBox="0 0 16 16">
    <rect x="0.5" y="1" width="4" height="14" fill="#fff" stroke="#777" />
    <path d="M7 3h3M12 3h3M7 8h3M12 8h3M7 13h3M12 13h3" stroke="#666" strokeWidth="1.5" />
  </svg>
);

const ThumbView = () => (
  <svg width="14" height="12" viewBox="0 0 14 12">
    <rect x="0.5" y="0.5" width="13" height="11" fill="#fff" stroke="#888" />
    <rect x="2" y="2" width="10" height="8" fill="#5aa6dc" />
    <path d="M2 10V6c3-1 6 0 10 2v2z" fill="#3c7d4e" />
  </svg>
);

const VmTabIcon = () => (
  <svg width="18" height="18" viewBox="0 0 18 18">
    <path d="M9 1l3.500 3.500L9 8 5.500 4.500z" fill="#d98a3a" />
    <path d="M4.500 5.500L8 9l-3.500 3.500L1 9z" fill="#4f6db0" />
    <path d="M13.500 5.500L17 9l-3.500 3.500L10 9z" fill="#6dbb3f" />
    <path d="M9 10l3.500 3.500L9 17l-3.500-3.500z" fill="#e8d34a" />
  </svg>
);

const TabX = () => (
  <svg width="13" height="13" viewBox="0 0 13 13">
    <path d="M2 2l9 9M11 2l-9 9" stroke="#5c5c5c" strokeWidth="3.4" />
  </svg>
);

const WinLogo = () => (
  <svg width="16" height="16" viewBox="0 0 16 16" fill="#fff">
    <path d="M0 2.300l6.700-1v6.300H0zM7.500 1.200L16 0v7.600H7.500zM0 8.400h6.700v6.300l-6.700-1zM7.500 8.400H16V16l-8.500-1.200z" />
  </svg>
);

const TaskSearch = () => (
  <svg width="17" height="18" viewBox="0 0 17 18" fill="none" stroke="#eee" strokeWidth="1.3">
    <circle cx="10.5" cy="6.5" r="5.5" />
    <path d="M6.500 10.500L1 17" />
  </svg>
);

const TaskView = () => (
  <svg width="16" height="15" viewBox="0 0 16 15" fill="none" stroke="#eee" strokeWidth="1.2">
    <path d="M0 0.600h11M0 14.400h11" />
    <rect x="1" y="3" width="9" height="9" />
    <rect x="13.5" y="3" width="2.5" height="3" fill="#eee" stroke="none" />
    <rect x="13.5" y="8" width="2.5" height="4" fill="#eee" stroke="none" />
  </svg>
);

const IeLogo = () => (
  <svg width="28" height="30" viewBox="0 0 28 30">
    <text x="14" y="24" textAnchor="middle" fontFamily="Liberation Sans" fontWeight="700" fontSize="26" fill="#2bb3ea">e</text>
    <path d="M4 26C2 23 7 13 15 9c5-3 9-3 9 0" fill="none" stroke="#e9b520" strokeWidth="1.4" />
  </svg>
);

const ExplorerIcon = () => (
  <svg width="22" height="20" viewBox="0 0 22 20">
    <path d="M0 1h8l2 2h12v17H0z" fill="#f7dc7a" />
    <rect y="3.5" width="22" height="2" fill="#fff2b8" />
    <path d="M6 20v-6h10v6h-3v-3H9v3z" fill="#29a6df" />
  </svg>
);

const SsmsIcon = () => (
  <svg width="24" height="26" viewBox="0 0 24 26">
    <path d="M3 4c0-4 11-4 11 0v11c-2 2-9 2-11 0z" fill="#f0cf3a" />
    <path d="M3 4c0 3 11 3 11 0" fill="none" stroke="#c9a820" />
    <path d="M17 1h6v6M1 19v6h6" fill="none" stroke="#16a34a" strokeWidth="1.8" />
    <path d="M23 20v5h-4" fill="none" stroke="#16a34a" strokeWidth="1.8" />
    <path d="M9 24l9-10M18 24l-8-10" stroke="#2a6fc0" strokeWidth="1.8" />
  </svg>
);

const ToolboxIcon = () => (
  <svg width="22" height="23" viewBox="0 0 22 23">
    <rect x="0.5" y="0.5" width="18" height="15" fill="#e4e4e2" stroke="#888" />
    <rect x="1" y="1" width="17" height="3" fill="#bbb" />
    <rect x="2" y="12" width="20" height="10" rx="1" fill="#c5252f" />
    <rect x="8" y="9" width="7" height="3" fill="none" stroke="#a01820" strokeWidth="1.2" />
    <path d="M2 16h20" stroke="#8c1118" />
  </svg>
);

const TrayNet = () => (
  <svg width="17" height="16" viewBox="0 0 17 16" fill="none" stroke="#eee">
    <rect x="2.5" y="3.5" width="14" height="9" fill="#0b0c0c" />
    <rect x="0.5" y="0.5" width="5" height="5" fill="#0b0c0c" />
    <path d="M9 13v2M5 15.5h8" />
  </svg>
);

const TrayMute = () => (
  <svg width="17" height="15" viewBox="0 0 17 15">
    <path d="M0.5 4.5h2.5L7 1v10L3 7.500H0.500z" fill="none" stroke="#eee" />
    <circle cx="12.5" cy="10.5" r="4.5" fill="#e0142a" />
    <path d="M11 9l3 3M14 9l-3 3" stroke="#fff" />
  </svg>
);

const TrayNote = () => (
  <svg width="16" height="15" viewBox="0 0 16 15">
    <path d="M0.5 0.5h15v11h-5l-2.5 2.5-2.5-2.5h-5z" fill="none" stroke="#eee" />
  </svg>
);

const dockApps: { key: string; node: React.ReactNode; dots?: number; active?: boolean }[] = [
  { key: 'firefox', node: <Firefox />, dots: 1 },
  { key: 'thunderbird', node: <Thunderbird /> },
  { key: 'software', node: <SoftwareCenter /> },
  { key: 'files', node: <FileCabinet />, dots: 1 },
  { key: 'rider', node: <JetBrains label="RD" a="#dd1265" b="#6b57ff" c="#ff8a2a" /> },
  { key: 'datagrip', node: <JetBrains label="DG" a="#22d88f" b="#ff45ed" c="#21d789" /> },
  { key: 'vscode', node: <VsCode /> },
  { key: 'vim', node: <Vim /> },
  { key: 'docker', node: <DockerLogo /> },
  { key: 'remmina', node: <RemminaLogo />, dots: 2, active: true },
  { key: 'aws', node: <AwsBox /> },
  { key: 'azure', node: <AzureLogo /> },
  { key: 'gimp', node: <Gimp /> },
  { key: 'video', node: <VideoApp /> },
  { key: 'zoom', node: <ZoomLogo /> },
];

const tools: { h: number; node: React.ReactNode; sepAfter?: boolean; selected?: boolean }[] = [
  { h: 32, node: <ToolFit /> },
  { h: 42, node: <ToolMove /> },
  { h: 24, node: <ToolCaret /> },
  { h: 38, node: <ToolStack />, sepAfter: true },
  { h: 34, node: <ToolScale />, selected: true },
  { h: 38, node: <ToolZoom /> },
  { h: 26, node: <ToolCaret /> },
  { h: 38, node: <ToolKeyboard /> },
  { h: 34, node: <ToolWrench /> },
  { h: 38, node: <ToolGears />, sepAfter: true },
  { h: 36, node: <ToolCamera /> },
  { h: 34, node: <ToolDownload /> },
  { h: 40, node: <ToolPlug /> },
];

const navItems: { label: string; icon: React.ReactNode; indent: number; pin?: boolean; selected?: boolean; gapTop?: boolean }[] = [
  { label: 'Hızlı erişim', icon: <QuickStar />, indent: 24 },
  { label: 'Masaüstü', icon: <DesktopGlyph />, indent: 32, pin: true },
  { label: 'İndirilenler', icon: <DownloadGlyph />, indent: 32, pin: true },
  { label: 'Belgeler', icon: <DocGlyph />, indent: 32, pin: true },
  { label: 'Resimler', icon: <PictureGlyph />, indent: 32, pin: true },
  { label: 'Bu bilgisayar', icon: <ComputerGlyph />, indent: 24, selected: true, gapTop: true },
  { label: 'Ağ', icon: <NetworkGlyph />, indent: 24, gapTop: true },
];

const App: React.FC = () => {
  return (
    <Page>
      <GlobalStyle />
      <Screen>
        <TopBar>
          <TopLeft>
            <span>Activities</span>
            <AppMenu>
              <RemminaSmall />
              <span>Remmina</span>
              <DownCaret />
            </AppMenu>
          </TopLeft>
          <Clock>Cts 14:10</Clock>
          <TopRight>
            <TraySlot $w={62}><ZigZag /></TraySlot>
            <TraySlot $w={28}><ZoomLogo size={22} /></TraySlot>
            <TraySlot $w={66}><TrayVideo /></TraySlot>
            <TraySlot $w={26}><Wifi /></TraySlot>
            <TraySlot $w={32}><Bluetooth /></TraySlot>
            <TraySlot $w={24}><Volume /></TraySlot>
            <TraySlot $w={32}><Battery /></TraySlot>
            <TraySlot $w={16}><DownCaret c="#d8d7d0" /></TraySlot>
          </TopRight>
        </TopBar>

        <Main>
          <Dock>
            {dockApps.map((app) => (
              <DockSlot key={app.key} $active={app.active}>
                {app.dots && (
                  <RunDots>
                    {Array.from({ length: app.dots }).map((_, i) => (
                      <RunDot key={i} />
                    ))}
                  </RunDots>
                )}
                {app.node}
              </DockSlot>
            ))}
            <DockSlot $h={29}>
              <GreenDome />
            </DockSlot>
            <DockSlot>
              <AppGrid />
            </DockSlot>
          </Dock>

          <AppArea>
            <TitleBar>
              VM-BACKUP
              <WinButtons>
                <TraySlot $w={20}><CircleBtn glyph="min" /></TraySlot>
                <TraySlot $w={20}><CircleBtn glyph="max" /></TraySlot>
                <TraySlot $w={20}><CircleBtn glyph="close" red /></TraySlot>
              </WinButtons>
            </TitleBar>

            <RemminaBody>
              <ToolBar>
                {tools.map((tool, i) => (
                  <React.Fragment key={i}>
                    <ToolSlot $h={tool.h} $selected={tool.selected}>
                      {tool.node}
                    </ToolSlot>
                    {tool.sepAfter && <ToolSep $after={i === 3 ? 2 : 0} />}
                  </React.Fragment>
                ))}
              </ToolBar>

              <SessionColumn>
                <TabStrip>
                  <SessionTab>
                    <VmTabIcon />
                    VM-BACKUP
                    <TabClose><TabX /></TabClose>
                  </SessionTab>
                </TabStrip>

                <Desktop>
                  <DesktopArea>
                    <IconGrid>
                      <DesktopIcon>
                        <RecycleBin />
                        <span>Geri<br />Dönüşü...</span>
                      </DesktopIcon>
                      <DesktopIcon>
                        <BigFolder />
                        <span>sql-server-...</span>
                      </DesktopIcon>
                      <DesktopIcon>
                        <TextFile />
                        <span>sql job query</span>
                      </DesktopIcon>
                      <DesktopIcon>
                        <ChromeWithBadge>
                          <Chrome />
                          <ShortcutBadge />
                        </ChromeWithBadge>
                        <span>Google<br />Chrome</span>
                      </DesktopIcon>
                    </IconGrid>

                    <ExplorerWindow>
                      <WinTitle>
                        <SmallFolder />
                        <QuickSep $l={7} $r={11} />
                        <CheckDoc />
                        <QuickSep $l={5} $r={4} />
                        <SmallFolder />
                        <NavButton $w={22}><QuickDown /></NavButton>
                        <QuickSep $l={0} $r={6} />
                        <TightText>DatabaseBackups</TightText>
                        <CaptionButtons>
                          <CaptionButton>
                            <svg width="10" height="2" viewBox="0 0 10 2"><path d="M0 1h10" stroke="#111" /></svg>
                          </CaptionButton>
                          <CaptionButton>
                            <svg width="10" height="10" viewBox="0 0 10 10"><rect x="0.5" y="0.5" width="9" height="9" fill="none" stroke="#111" /></svg>
                          </CaptionButton>
                          <CaptionButton>
                            <svg width="11" height="11" viewBox="0 0 11 11"><path d="M0.5 0.5l10 10M10.5 0.5l-10 10" stroke="#111" /></svg>
                          </CaptionButton>
                        </CaptionButtons>
                      </WinTitle>

                      <RibbonTabs>
                        <RibbonTab $active $w={56}>Dosya</RibbonTab>
                        <RibbonTab $w={52}>Giriş</RibbonTab>
                        <RibbonTab $w={58}>Paylaş</RibbonTab>
                        <RibbonTab $w={82}>Görünüm</RibbonTab>
                        <RibbonEnd>
                          <Chevron c="#a9aeab" />
                          <HelpDot />
                        </RibbonEnd>
                      </RibbonTabs>

                      <AddressRow>
                        <NavButton $w={38}><ArrowLeft c="#6b6f6d" /></NavButton>
                        <NavButton $w={22}><ArrowRight c="#c9cecb" /></NavButton>
                        <NavButton $w={24}><Chevron c="#8e9290" w={7} /></NavButton>
                        <NavButton $w={20}><ArrowUp /></NavButton>
                        <AddressBox>
                          <SmallFolder />
                          <CrumbArrow $w={21}><CrumbChevron /></CrumbArrow>
                          <Crumb>Bu bilgisayar</Crumb>
                          <CrumbArrow $w={23}><CrumbChevron /></CrumbArrow>
                          <Crumb>Windows (C:)</Crumb>
                          <CrumbArrow $w={23}><CrumbChevron /></CrumbArrow>
                          <TightText>DatabaseBackups</TightText>
                          <AddressEnd>
                            <Chevron c="#555" />
                            <RefreshCell><Refresh /></RefreshCell>
                          </AddressEnd>
                        </AddressBox>
                        <SearchBox>
                          <TightText>Ara: DatabaseBackups</TightText>
                          <SearchGlass />
                        </SearchBox>
                      </AddressRow>

                      <ContentRow>
                        <NavPane>
                          {navItems.map((item) => (
                            <NavRow key={item.label} $indent={item.indent} $selected={item.selected} $gapTop={item.gapTop}>
                              {item.icon}
                              <span>{item.label}</span>
                              {item.pin && <NavPin><PinGlyph /></NavPin>}
                            </NavRow>
                          ))}
                        </NavPane>

                        <FileArea>
                          <SortCaret><SortUp /></SortCaret>
                          <ColumnHeader>
                            <ColumnCell $w={273} $pad={19}>Ad</ColumnCell>
                            <ColumnCell $w={120}>Değiştirme tarihi</ColumnCell>
                            <ColumnCell $w={120}>Tür</ColumnCell>
                            <ColumnCell $w={80}>Boyut</ColumnCell>
                          </ColumnHeader>
                          <EmptyNote>Bu klasör boş.</EmptyNote>
                          <Pointer><MouseArrow /></Pointer>
                        </FileArea>
                      </ContentRow>

                      <StatusBar>
                        <StatusCount>0 öğe</StatusCount>
                        <ViewButtons>
                          <ViewButton $active><DetailsView /></ViewButton>
                          <ViewButton><ThumbView /></ViewButton>
                        </ViewButtons>
                      </StatusBar>

                      <RedFrame />
                    </ExplorerWindow>
                  </DesktopArea>

                  <Taskbar>
                    <TaskSlot><WinLogo /></TaskSlot>
                    <TaskSlot><TaskSearch /></TaskSlot>
                    <TaskSlot><TaskView /></TaskSlot>
                    <TaskSlot><IeLift><IeLogo /></IeLift></TaskSlot>
                    <TaskSlot $open $focused><ExplorerIcon /></TaskSlot>
                    <TaskSlot><Chrome size={22} /></TaskSlot>
                    <TaskSlot $open><SsmsIcon /></TaskSlot>
                    <TaskSlot><ToolboxIcon /></TaskSlot>
                    <TaskTray>
                      <TrayIcon $w={28}><TrayNet /></TrayIcon>
                      <TrayIcon $w={20}><TrayMute /></TrayIcon>
                      <TrayIcon $w={40}>TUR</TrayIcon>
                      <TrayClock>
                        <span>14:10</span>
                        <span>3.08.2019</span>
                      </TrayClock>
                      <TrayIcon $w={44}><TrayNote /></TrayIcon>
                      <TrayEnd />
                    </TaskTray>
                  </Taskbar>
                </Desktop>
              </SessionColumn>
            </RemminaBody>
          </AppArea>
        </Main>
      </Screen>
      <EdgeStrip />
    </Page>
  );
};

export default App;
